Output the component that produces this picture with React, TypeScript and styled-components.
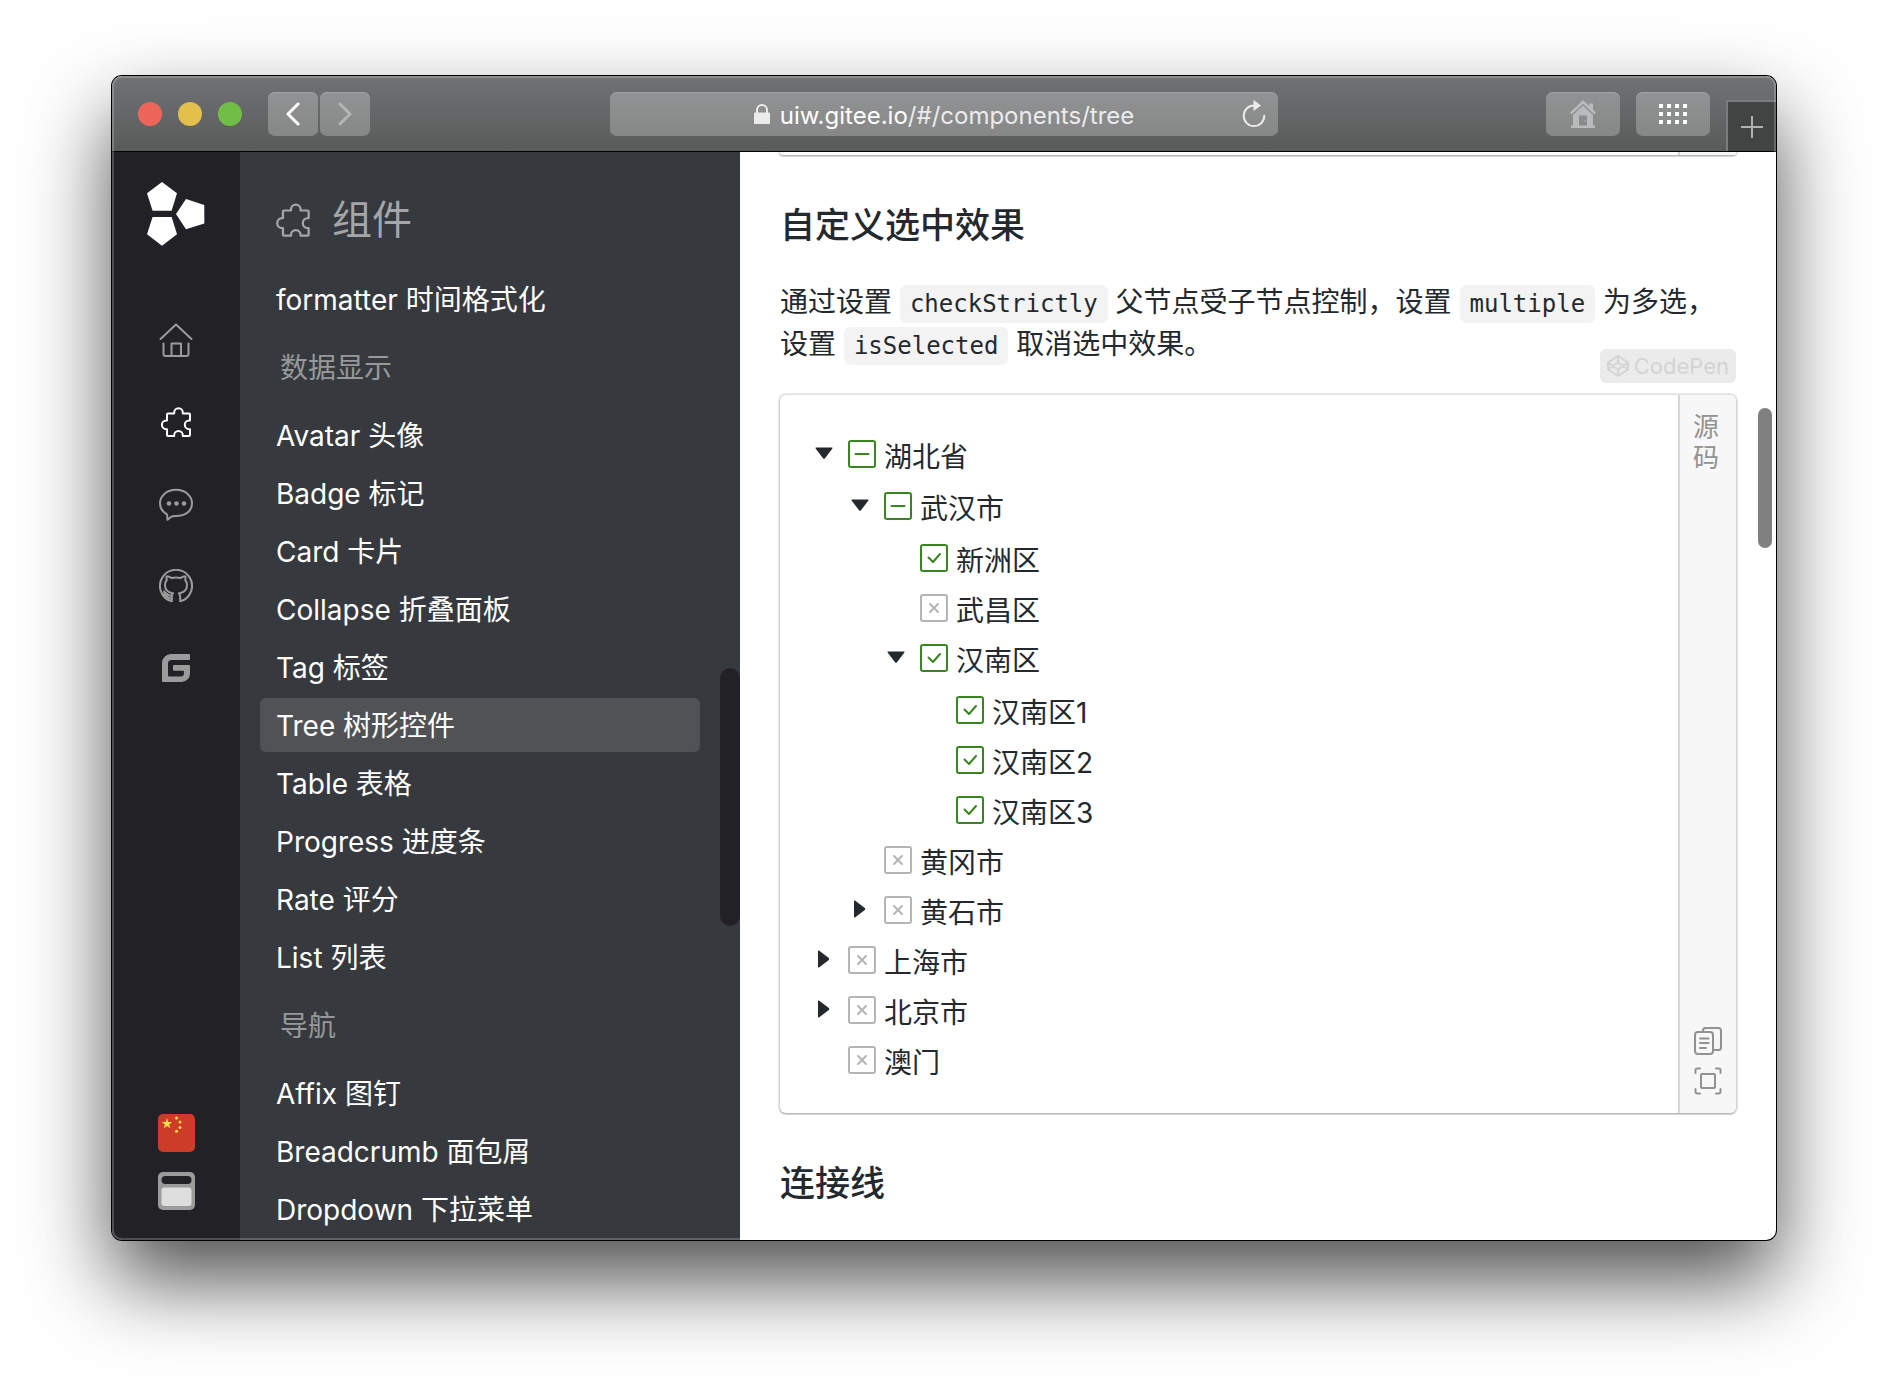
import React, { useEffect, useRef, useState } from "react";
import styled, { createGlobalStyle, css } from "styled-components";

const sans = `"Inter", "Noto Sans CJK SC", sans-serif`;
const mono = `"DejaVu Sans Mono", "Noto Sans CJK SC", monospace`;
const ink = "#24292e";
const green = "#38851f";

const GlobalStyle = createGlobalStyle`
  *, *::before, *::after { box-sizing: border-box; }
  body { margin: 0; background: #fff; font-family: ${sans}; color: ${ink}; }
  button, input { font: inherit; color: inherit; margin: 0; }
  button { border: 0; padding: 0; background: none; cursor: pointer; }
  a { color: inherit; text-decoration: none; }
  svg { display: block; flex: none; }
  h2, p, ul { margin: 0; padding: 0; }
  ul { list-style: none; }
`;

/* ---------- desktop and window ---------- */

const Desktop = styled.div`
  display: flex;
  height: 100vh;
  min-height: 700px;
  padding: 76px 112px 148px;
  overflow: hidden;
`;

const BrowserWindow = styled.div`
  position: relative;
  flex: 1;
  min-width: 0;
  display: flex;
  flex-direction: column;
  border-radius: 10px;
  overflow: hidden;
  background: #fff;
  box-shadow: 0 0 0 1px #000, 0 40px 84px rgba(0, 0, 0, 0.7);

  &::after {
    content: "";
    position: absolute;
    inset: 0;
    border-radius: 10px;
    box-shadow: inset 0 0 0 2px rgba(255, 255, 255, 0.2);
    pointer-events: none;
  }
`;

const TitleBar = styled.header`
  flex: none;
  display: grid;
  grid-template-columns: 1fr minmax(0, 668px) 1fr;
  align-items: center;
  height: 76px;
  background: linear-gradient(#717274, #595a5a);
  box-shadow: inset 0 -1px 0 #000;
`;

const BarSide = styled.div<{ $end?: boolean }>`
  display: flex;
  align-items: center;
  height: 76px;
  ${(p) =>
    p.$end
      ? css`
          justify-content: flex-end;
          gap: 16px;
        `
      : css`
          padding-left: 26px;
          gap: 26px;
        `}
`;

const Lights = styled.div`
  display: flex;
  gap: 16px;
`;

const Light = styled.button<{ $color: string }>`
  width: 24px;
  height: 24px;
  border-radius: 50%;
  background: ${(p) => p.$color};
`;

const History = styled.div`
  display: flex;
  gap: 2px;
`;

const barControl = css`
  display: flex;
  align-items: center;
  justify-content: center;
  height: 44px;
  border-radius: 7px;
  background: linear-gradient(#919293, #868787);
  box-shadow: inset 0 1px 0 #a3a4a5;
`;

const BarButton = styled.button<{ $wide?: boolean }>`
  ${barControl}
  width: ${(p) => (p.$wide ? 74 : 50)}px;
`;

const AddressBar = styled.div`
  ${barControl}
  display: grid;
  grid-template-columns: 1fr auto 1fr;
  padding: 0 12px;
`;

const Address = styled.button`
  grid-column: 2;
  display: flex;
  align-items: center;
  gap: 10px;
  font-size: 24px;
  line-height: 40px;
  color: #fff;
`;

const Url = styled.span`
  padding-top: 3px;
`;

const Path = styled.span`
  color: #ebebeb;
`;

const Reload = styled.button`
  justify-self: end;
`;

const NewTab = styled.button`
  align-self: flex-end;
  display: flex;
  align-items: center;
  justify-content: center;
  width: 50px;
  height: 51px;
  margin-bottom: 1px;
  background: #424343;
  border-top: 2px solid #7b7c7d;
  border-left: 2px solid #7b7c7d;
`;

const Body = styled.div`
  flex: 1;
  min-height: 0;
  display: flex;
`;

/* ---------- icon rail ---------- */

const Rail = styled.nav`
  flex: none;
  width: 128px;
  display: flex;
  flex-direction: column;
  align-items: center;
  padding: 30px 0;
  background: #222226;
`;

const RailLinks = styled.div`
  display: flex;
  flex-direction: column;
  gap: 48px;
  padding-top: 77px;
`;

const RailLink = styled.a<{ $active?: boolean }>`
  color: ${(p) => (p.$active ? "#fff" : "#9b9b9c")};
`;

const RailTools = styled.div`
  display: flex;
  flex-direction: column;
  gap: 20px;
  margin-top: auto;
`;

/* ---------- component menu ---------- */

const Sidebar = styled.aside`
  position: relative;
  flex: none;
  width: 500px;
  padding: 0 40px 0 20px;
  background: #363a3e;
  overflow: hidden;
`;

const SidebarTitle = styled.div`
  display: flex;
  align-items: center;
  gap: 20px;
  height: 120px;
  padding: 16px 14px 0;
  font-size: 40px;
  line-height: 60px;
  color: #a5a6a8;
`;

const Menu = styled.ul`
  display: flex;
  flex-direction: column;
  gap: 4px;
`;

const MenuGroup = styled.li`
  height: 74px;
  padding: 2px 0 0 20px;
  font-size: 28px;
  line-height: 72px;
  color: #97989a;
`;

const MenuLink = styled.a<{ $active?: boolean }>`
  display: block;
  height: 54px;
  padding: 3px 16px 0;
  border-radius: 6px;
  font-size: 28px;
  line-height: 51px;
  white-space: nowrap;
  color: #fff;
  background: ${(p) => (p.$active ? "#505256" : "transparent")};
`;

const Thumb = styled.div<{ $dark?: boolean }>`
  position: absolute;
  ${(p) =>
    p.$dark
      ? css`
          top: 516px;
          right: 0;
          width: 20px;
          height: 258px;
          border-radius: 10px;
          background: #222226;
        `
      : css`
          top: 256px;
          right: 4px;
          width: 14px;
          height: 140px;
          border-radius: 7px;
          background: #808080;
        `}
`;

/* ---------- article ---------- */

const Article = styled.main`
  position: relative;
  flex: 1;
  min-width: 0;
  padding: 0 40px;
  overflow: hidden;
`;

const Heading = styled.h2`
  margin: 48px 0 34px;
  font-size: 35px;
  line-height: 44px;
  font-weight: 500;
`;

const Paragraph = styled.p`
  font-size: 28px;
  line-height: 42px;
`;

const Code = styled.code`
  display: inline-block;
  padding: 5px 10px;
  border-radius: 6px;
  background: #f3f3f3;
  font-family: ${mono};
  font-size: 24px;
  line-height: 28px;
`;

const Card = styled.section<{ $tail?: boolean }>`
  position: relative;
  display: flex;
  border-radius: ${(p) => (p.$tail ? "0 0 6px 6px" : "6px")};
  height: ${(p) => (p.$tail ? "3px" : "auto")};
  margin-top: ${(p) => (p.$tail ? "0" : "30px")};
  box-shadow: 0 0 0 2px rgba(16, 22, 26, 0.1), 0 1px 2px rgba(16, 22, 26, 0.3);
  background: #fff;
`;

const Demo = styled.div`
  flex: 1;
  padding: 36px 32px 24px;
`;

const Source = styled.div`
  width: 58px;
  display: flex;
  flex-direction: column;
  align-items: center;
  padding: 16px 0 18px;
  border-left: 2px solid #d6d6d6;
  border-radius: 0 6px 6px 0;
  background: #f7f7f7;
  color: #929292;
`;

const SourceTail = styled(Source)`
  margin-left: auto;
  padding: 0;
`;

const SourceToggle = styled.button`
  width: 32px;
  padding-right: 4px;
  margin-bottom: auto;
  font-size: 26px;
  line-height: 31px;
`;

const SourceTool = styled.button`
  margin-top: 12px;
`;

const CodePen = styled.button`
  position: absolute;
  top: -46px;
  right: 0;
  display: flex;
  align-items: center;
  gap: 5px;
  height: 34px;
  padding: 0 7px;
  border-radius: 6px;
  font-size: 22px;
  line-height: 34px;
  background: #ebebeb;
  color: #d4d4d4;
`;

/* ---------- tree ---------- */

const Branch = styled.ul<{ $nested?: boolean }>`
  padding-top: 2px;
  padding-left: ${(p) => (p.$nested ? 36 : 0)}px;
`;

const Row = styled.div`
  display: flex;
  align-items: flex-start;
  height: 50px;
`;

const Toggle = styled.button<{ $hidden?: boolean }>`
  display: flex;
  align-items: center;
  justify-content: center;
  width: 24px;
  height: 40px;
  margin-right: 12px;
  visibility: ${(p) => (p.$hidden ? "hidden" : "visible")};
`;

const NodeLabel = styled.label`
  display: flex;
  align-items: flex-start;
  gap: 8px;
  font-size: 28px;
  line-height: 48px;
  cursor: pointer;
`;

const BoxFrame = styled.span<{ $on: boolean }>`
  display: grid;
  place-items: center;
  width: 28px;
  height: 28px;
  margin-top: 7px;
  color: ${(p) => (p.$on ? green : "#b5b5b5")};

  svg,
  input {
    grid-area: 1 / 1;
  }
  svg {
    pointer-events: none;
  }
`;

const Box = styled.input`
  appearance: none;
  width: 28px;
  height: 28px;
  border: 2px solid currentColor;
  border-radius: 3px;
  background: #fff;
`;

/* ---------- icons ---------- */

const stroke = {
  fill: "none",
  stroke: "currentColor",
  strokeWidth: 2,
  strokeLinecap: "round" as const,
  strokeLinejoin: "round" as const,
};

const LogoIcon = () => (
  <svg width="58" height="64" viewBox="0 0 58 64" fill="#fff">
    <path d="M15 0 30 11.3 24.6 28.7H5.6L0 11.3Z" />
    <path d="M5.6 35H24.6L30 52.3 15 63.7 0 52.3Z" />
    <path d="M29 32 39 17 57.3 23V41.5L39 47.2Z" />
  </svg>
);

const HomeIcon = () => (
  <svg width="34" height="34" viewBox="0 0 34 34" {...stroke}>
    <path d="M1.5 16 17 1.5 32.5 16" />
    <path d="M4.5 20.500V31a2 2 0 0 0 2 2H27.500a2 2 0 0 0 2-2V20.500" />
    <path d="M12.500 33V20.500H22V33" />
  </svg>
);

const PuzzleIcon = ({ size = 34 }: { size?: number }) => (
  <svg width={size} height={size} viewBox="0 0 34 34" {...stroke}>
    <path d="M9 8.500H15.200V7.500a4.300 4.300 0 0 1 8.600 0V8.500H30a1 1 0 0 1 1 1V15.400H30.200a4.400 4.400 0 0 0 0 8.800H31V30a1 1 0 0 1-1 1H23.800V30.300a4.300 4.300 0 0 0-8.600 0V31H9a1 1 0 0 1-1-1V24.200H7.300a4.400 4.400 0 0 1 0-8.800H8V9.500a1 1 0 0 1 1-1Z" />
  </svg>
);

const CommentIcon = () => (
  <svg width="34" height="34" viewBox="0 -1 34 34" {...stroke}>
    <path d="M8 26.300C3.600 23.800 1 19.800 1 15.500 1 7.500 8 1.800 17 1.800S33 7.500 33 15.500 26 28 17 28C14 28 13 28 11.500 29.200 10.500 30 9.500 31.300 8.500 31.800 8 30.500 8.500 28 8 26.300Z" />
    <g fill="currentColor" stroke="none">
      <circle cx="10" cy="15.500" r="2.300" />
      <circle cx="17.500" cy="15.500" r="2.300" />
      <circle cx="25" cy="15.500" r="2.300" />
    </g>
  </svg>
);

const GithubIcon = () => (
  <svg width="34" height="34" viewBox="0 0 34 34" {...stroke}>
    <path d="M12.800 32.300A16 16 0 1 1 21.200 32.300V28C21.200 26.500 20.800 25.300 20 24.300 25 23.600 28 21 28 16 28 13.800 27.300 12.300 26.200 11 26.700 9.700 26.700 8.500 26.200 7.200 24.500 7.200 22.800 8 21.500 9 18.500 8.300 15.500 8.300 12.500 9 11.200 8 9.500 7.200 7.800 7.200 7.300 8.500 7.300 9.700 7.800 11 6.700 12.300 6 13.800 6 16 6 21 9 23.600 14 24.300 13.200 25.100 12.800 26.200 12.800 27.300Z" />
    <path d="M12.500 26.800C9.500 27.500 8.800 24.500 5.200 23.500M12.500 29.500C8 30 8 26.500 4.500 25.500M5 22.300 8 28" />
  </svg>
);

const GiteeIcon = () => (
  <svg width="34" height="34" viewBox="0 0 34 34" fill="currentColor">
    <path d="M12 3H30a1 1 0 0 1 1 1V8a1 1 0 0 1-1 1H12.500A3.500 3.500 0 0 0 9 12.500V24.500a1 1 0 0 0 1 1H21.500A3.500 3.500 0 0 0 25 22V20.800a1 1 0 0 0-1-1H15a1 1 0 0 1-1-1V15a1 1 0 0 1 1-1H30a1 1 0 0 1 1 1V22.500A8.500 8.500 0 0 1 22.500 31H4a1 1 0 0 1-1-1V12A9 9 0 0 1 12 3Z" />
  </svg>
);

const FlagIcon = () => (
  <svg width="38" height="38" viewBox="0 0 38 38">
    <rect x="1" width="37" height="38" rx="5" fill="#cd3c26" />
    <path
      d="M10 4 11.300 8H15.300L12.100 10.400 13.300 14.300 10 11.900 6.700 14.300 7.900 10.400 4.700 8H8.700Z"
      fill="#fbdf4b"
    />
    <g fill="#fbdf4b">
      <circle cx="19.500" cy="4" r="1.500" />
      <circle cx="23" cy="8" r="1.500" />
      <circle cx="23" cy="13.500" r="1.500" />
      <circle cx="19.500" cy="17.300" r="1.500" />
    </g>
  </svg>
);

const ThemeIcon = () => (
  <svg width="38" height="38" viewBox="0 0 38 38">
    <rect x="1" width="37" height="38" rx="5" fill="#9b9b9b" />
    <rect x="4.500" y="4" width="30" height="8" rx="4" fill="#222226" />
    <rect x="4.500" y="15.500" width="30" height="18.500" rx="3" fill="#dedede" />
  </svg>
);

const LockIcon = () => (
  <svg width="16" height="20" viewBox="0 0 16 20">
    <rect y="8.500" width="16" height="11.500" rx="1" fill="#ebebeb" />
    <path d="M3 9V6a5 5 0 0 1 10 0V9" fill="none" stroke="#ebebeb" strokeWidth="2" />
  </svg>
);

const ReloadIcon = () => (
  <svg width="24" height="28" viewBox="0 0 24 28">
    <path d="M12 5.500A10.300 10.300 0 1 0 22.300 15.800" fill="none" stroke="#ebebeb" strokeWidth="2" strokeLinecap="round" />
    <path d="M11.500 0 19 5.500 11.500 11Z" fill="#ebebeb" />
  </svg>
);

const ChevronIcon = ({ forward }: { forward?: boolean }) => (
  <svg width="14" height="24" viewBox="0 0 14 24" {...stroke} strokeWidth={3} stroke={forward ? "#b4b5b6" : "#fff"}>
    <path d={forward ? "M2 2 12 12 2 22" : "M12 2 2 12 12 22"} />
  </svg>
);

const BarHomeIcon = () => (
  <svg width="28" height="28" viewBox="0 0 28 28" fill="#b9babb">
    <path d="M14 0 20 5.800V3.500H24V9.700L27 12.500 25.300 14.500 14 3.800 2.700 14.500 1 12.500Z" />
    <path d="M14 5.500 24 15V25.500H26V28H2V25.500H4V15ZM10 15.500V25.500H18V15.500Z" fillRule="evenodd" />
    <circle cx="16.300" cy="21" r="0.700" />
  </svg>
);

const GridIcon = () => (
  <svg width="28" height="20" viewBox="0 0 28 20" fill="#fff">
    {[0, 8, 16].map((y) => [0, 8, 16, 24].map((x) => <rect key={`${x}-${y}`} x={x} y={y} width="4" height="4" />))}
  </svg>
);

const PlusIcon = () => (
  <svg width="22" height="22" viewBox="0 0 22 22" stroke="#b0b1b1" strokeWidth="2">
    <path d="M11 0V22M0 11H22" />
  </svg>
);

const CodePenIcon = () => (
  <svg width="22" height="22" viewBox="0 0 22 22" {...stroke}>
    <path d="M11 1 21 7.500V14.500L11 21 1 14.500V7.500ZM11 1V7.500M11 14.500V21M1 7.500 11 14.500 21 7.500M1 14.500 11 7.500 21 14.500" />
  </svg>
);

const CopyIcon = () => (
  <svg width="28" height="28" viewBox="0 0 28 28" {...stroke}>
    <rect x="1" y="5" width="18" height="22" rx="3" />
    <path d="M9 4.500V3.500A2.500 2.500 0 0 1 11.500 1H24.500A2.500 2.500 0 0 1 27 3.500V20.500A2.500 2.500 0 0 1 24.500 23H19.500" />
    <path d="M6 11.500H14.500M6 16H14.500M6 21H12" />
  </svg>
);

const FullIcon = () => (
  <svg width="28" height="28" viewBox="0 0 28 28" {...stroke}>
    <rect x="7" y="7" width="14" height="14" rx="1" />
    <path d="M6 1.500H3A1.500 1.500 0 0 0 1.500 3V6M22 1.500H25A1.500 1.500 0 0 1 26.500 3V6M26.500 22V25A1.500 1.500 0 0 1 25 26.500H22M6 26.500H3A1.500 1.500 0 0 1 1.500 25V22" />
  </svg>
);

const CaretIcon = ({ open }: { open: boolean }) => (
  <svg width="20" height="20" viewBox="0 0 20 20" fill={ink}>
    <path
      d={
        open
          ? "M2.200 4.500H17.800Q19.200 4.500 18.200 5.800L11 15.200Q10 16.300 9 15.200L1.800 5.800Q.800 4.500 2.200 4.500Z"
          : "M4 2.200V17.800Q4 19.200 5.300 18.200L14.800 11Q15.800 10 14.800 9L5.300 1.800Q4 .800 4 2.200Z"
      }
    />
  </svg>
);

const marks = {
  mixed: "M7.500 14H20.500",
  on: "M8.500 13.500 13 18 20 10",
  off: "M10 10 18 18M18 10 10 18",
};

/* ---------- tree behaviour ---------- */

type State = keyof typeof marks;
interface TreeNode {
  name: string;
  state: State;
  closed?: boolean;
  nodes?: TreeNode[];
}

const tree: TreeNode[] = [
  {
    name: "湖北省",
    state: "mixed",
    nodes: [
      {
        name: "武汉市",
        state: "mixed",
        nodes: [
          { name: "新洲区", state: "on" },
          { name: "武昌区", state: "off" },
          {
            name: "汉南区",
            state: "on",
            nodes: [
              { name: "汉南区1", state: "on" },
              { name: "汉南区2", state: "on" },
              { name: "汉南区3", state: "on" },
            ],
          },
        ],
      },
      { name: "黄冈市", state: "off" },
      { name: "黄石市", state: "off", closed: true, nodes: [] },
    ],
  },
  { name: "上海市", state: "off", closed: true, nodes: [] },
  { name: "北京市", state: "off", closed: true, nodes: [] },
  { name: "澳门", state: "off" },
];

const NodeItem = ({ node }: { node: TreeNode }) => {
  const [open, setOpen] = useState(!node.closed);
  const [state, setState] = useState<State>(node.state);
  const box = useRef<HTMLInputElement>(null);
  useEffect(() => {
    if (box.current) box.current.indeterminate = state === "mixed";
  }, [state]);
  return (
    <li>
      <Row>
        <Toggle type="button" $hidden={!node.nodes} aria-label={node.name} aria-expanded={open} onClick={() => setOpen(!open)}>
          <CaretIcon open={open} />
        </Toggle>
        <NodeLabel>
          <BoxFrame $on={state !== "off"}>
            <Box
              ref={box}
              type="checkbox"
              checked={state === "on"}
              onChange={() => setState(state === "on" ? "off" : "on")}
            />
            <svg width="28" height="28" viewBox="0 0 28 28" {...stroke}>
              <path d={marks[state]} />
            </svg>
          </BoxFrame>
          {node.name}
        </NodeLabel>
      </Row>
      {open && node.nodes && <TreeList nodes={node.nodes} nested />}
    </li>
  );
};

const TreeList = ({ nodes, nested }: { nodes: TreeNode[]; nested?: boolean }) => (
  <Branch $nested={nested}>
    {nodes.map((n) => (
      <NodeItem key={n.name} node={n} />
    ))}
  </Branch>
);

/* ---------- page ---------- */

const menu: { text: string; group?: boolean; active?: boolean }[] = [
  { text: "formatter 时间格式化" },
  { text: "数据显示", group: true },
  { text: "Avatar 头像" },
  { text: "Badge 标记" },
  { text: "Card 卡片" },
  { text: "Collapse 折叠面板" },
  { text: "Tag 标签" },
  { text: "Tree 树形控件", active: true },
  { text: "Table 表格" },
  { text: "Progress 进度条" },
  { text: "Rate 评分" },
  { text: "List 列表" },
  { text: "导航", group: true },
  { text: "Affix 图钉" },
  { text: "Breadcrumb 面包屑" },
  { text: "Dropdown 下拉菜单" },
];

const App = () => (
  <Desktop>
    <GlobalStyle />
    <BrowserWindow>
      <TitleBar>
        <BarSide>
          <Lights>
            <Light $color="#ee6659" aria-label="Close" />
            <Light $color="#e2c04b" aria-label="Minimize" />
            <Light $color="#71be46" aria-label="Zoom" />
          </Lights>
          <History>
            <BarButton aria-label="Back">
              <ChevronIcon />
            </BarButton>
            <BarButton aria-label="Forward">
              <ChevronIcon forward />
            </BarButton>
          </History>
        </BarSide>
        <AddressBar>
          <Address>
            <LockIcon />
            <Url>
              uiw.gitee.io<Path>/#/components/tree</Path>
            </Url>
          </Address>
          <Reload aria-label="Reload">
            <ReloadIcon />
          </Reload>
        </AddressBar>
        <BarSide $end>
          <BarButton $wide aria-label="Home">
            <BarHomeIcon />
          </BarButton>
          <BarButton $wide aria-label="Top sites">
            <GridIcon />
          </BarButton>
          <NewTab aria-label="New tab">
            <PlusIcon />
          </NewTab>
        </BarSide>
      </TitleBar>

      <Body>
        <Rail>
          <a href="#/" aria-label="uiw">
            <LogoIcon />
          </a>
          <RailLinks>
            <RailLink href="#/" aria-label="Home">
              <HomeIcon />
            </RailLink>
            <RailLink href="#/components" aria-label="Components" $active>
              <PuzzleIcon />
            </RailLink>
            <RailLink href="#/issues" aria-label="Issues">
              <CommentIcon />
            </RailLink>
            <RailLink href="#/github" aria-label="GitHub">
              <GithubIcon />
            </RailLink>
            <RailLink href="#/gitee" aria-label="Gitee">
              <GiteeIcon />
            </RailLink>
          </RailLinks>
          <RailTools>
            <button type="button" aria-label="Language">
              <FlagIcon />
            </button>
            <button type="button" aria-label="Layout">
              <ThemeIcon />
            </button>
          </RailTools>
        </Rail>

        <Sidebar>
          <SidebarTitle>
            <PuzzleIcon size={38} />
            组件
          </SidebarTitle>
          <Menu>
            {menu.map((m) =>
              m.group ? (
                <MenuGroup key={m.text}>{m.text}</MenuGroup>
              ) : (
                <li key={m.text}>
                  <MenuLink href="#/components" $active={m.active}>
                    {m.text}
                  </MenuLink>
                </li>
              )
            )}
          </Menu>
          <Thumb $dark />
        </Sidebar>

        <Article>
          <Card $tail>
            <SourceTail />
          </Card>
          <Heading>自定义选中效果</Heading>
          <Paragraph>
            通过设置 <Code>checkStrictly</Code> 父节点受子节点控制，设置 <Code>multiple</Code> 为多选，设置{" "}
            <Code>isSelected</Code> 取消选中效果。
          </Paragraph>
          <Card>
            <CodePen type="button">
              <CodePenIcon />
              CodePen
            </CodePen>
            <Demo>
              <TreeList nodes={tree} />
            </Demo>
            <Source>
              <SourceToggle type="button">源码</SourceToggle>
              <SourceTool type="button" aria-label="Copy">
                <CopyIcon />
              </SourceTool>
              <SourceTool type="button" aria-label="Full screen">
                <FullIcon />
              </SourceTool>
            </Source>
          </Card>
          <Heading>连接线</Heading>
          <Thumb />
        </Article>
      </Body>
    </BrowserWindow>
  </Desktop>
);

export default App;
